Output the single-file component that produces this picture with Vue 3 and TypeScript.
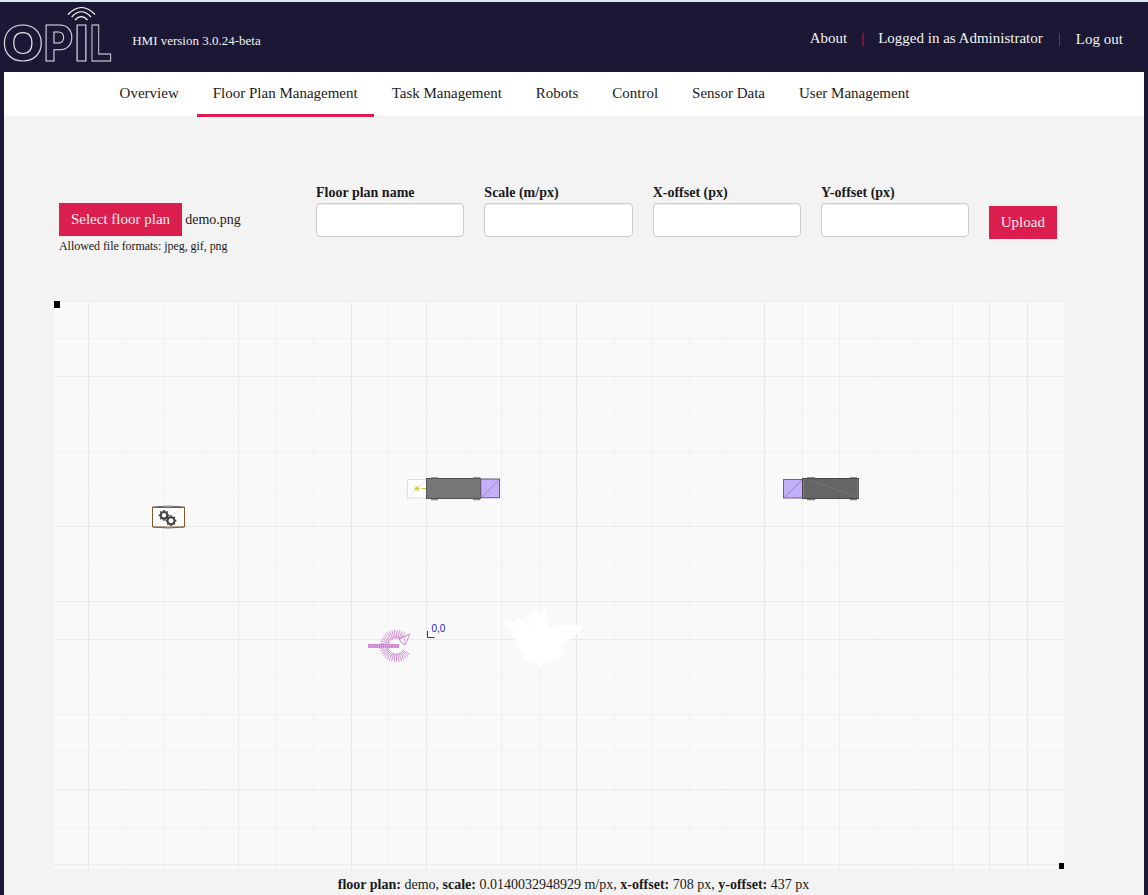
<script setup lang="ts">
const tabs: string[] = ['Overview', 'Floor Plan Management', 'Task Management', 'Robots', 'Control', 'Sensor Data', 'User Management']
const activeTab = 'Floor Plan Management'
const fields: string[] = ['Floor plan name', 'Scale (m/px)', 'X-offset (px)', 'Y-offset (px)']

interface Line { at: number; color: string }
const shades = ['#f7f7f6', '#f3f3f3', '#efefef', '#e9e9ea']
const verticalLevels = [3, 1, 2, 0, 3, 2, 1, 3, 1, 3, 0, 2, 2, 3, 1, 1, 1, 0, 3, 2, 2, 0, 1, 2, 3, 3]
const verticals: Line[] = verticalLevels.map((l, i) => ({ at: Math.floor(34.4 + i * 37.56), color: shades[l] }))
const horizontalLevels = [2, 2, 3, 1, 2, 1, 3, 1, 3, 3, 1, 2, 1, 3, 2, 3]
const horizontals: Line[] = horizontalLevels.map((l, i) => ({ at: Math.floor(0.2 + i * 37.56), color: shades[l] }))

// Sampled headings of the curved trail, drawn as spokes around its centre
const spokes = Array.from({ length: 30 }, (_, i) => {
  const a = (32 + i * 9.3) * Math.PI / 180
  return { x1: 342 + Math.cos(a) * 7.5, y1: 345 + Math.sin(a) * 7.5, x2: 342 + Math.cos(a) * 16, y2: 345 + Math.sin(a) * 16 }
})
const teeth = [0, 45, 90, 135, 180, 225, 270, 315]
</script>

<template>
  <div class="page">
    <header class="header">
      <svg class="logo" width="112" height="76" viewBox="0 0 112 76" role="img" aria-label="OPIL">
        <g class="outline">
          <text x="2.200" y="59" textLength="41.200" lengthAdjust="spacingAndGlyphs">O</text>
          <text x="43.600" y="59" textLength="29.800" lengthAdjust="spacingAndGlyphs">P</text>
          <text x="74.200" y="59" textLength="14.500" lengthAdjust="spacingAndGlyphs">I</text>
          <text x="89.800" y="59" textLength="22.200" lengthAdjust="spacingAndGlyphs">L</text>
        </g>
        <g fill="none" stroke="#fff" stroke-width="1.2">
          <path d="M68 12.500Q81.500 -1.500 95 12.500" />
          <path d="M71.700 15Q81.300 4.500 91 15" />
          <path d="M75 18Q81.300 11.400 87.500 18" />
        </g>
      </svg>
      <span class="version">HMI version 3.0.24-beta</span>
      <div class="account">
        <span>About</span><i class="bar wide"></i><span>Logged in as Administrator</span><i class="bar"></i><span class="logout">Log out</span>
      </div>
    </header>

    <nav class="nav">
      <a v-for="t in tabs" :key="t" class="tab" :class="{ active: t === activeTab }">{{ t }}</a>
    </nav>

    <main class="main">
      <form class="form" @submit.prevent>
        <div class="file">
          <div class="file-row"><button type="button" class="btn">Select floor plan</button><span>demo.png</span></div>
          <div class="hint">Allowed file formats: jpeg, gif, png</div>
        </div>
        <label v-for="f in fields" :key="f" class="field"><span>{{ f }}</span><input type="text"></label>
        <button type="submit" class="btn upload">Upload</button>
      </form>

      <svg class="plan" width="1010" height="568" viewBox="0 0 1010 568">
        <rect width="1010" height="568" fill="#f9f9f9" />
        <rect v-for="l in verticals" :key="'v' + l.at" :x="l.at" y="0" width="1" height="568" :fill="l.color" />
        <rect v-for="l in horizontals" :key="'h' + l.at" x="0" :y="l.at" width="1010" height="1" :fill="l.color" />
        <rect width="6" height="7" />
        <rect x="1005" y="562" width="5" height="6" />

        <!-- left vehicle -->
        <rect x="353.500" y="178.500" width="19" height="18.500" fill="#fefefe" stroke="#dedede" />
        <path d="M354 197L372 179" stroke="#ddd" stroke-width=".7" />
        <path d="M360.500 187.500H365.500M363 185V190M361 185.500L365 189.500M365 185.500L361 189.500M367.500 187.500H372" stroke="#cfc72c" />
        <rect x="372.500" y="177.500" width="54" height="20" fill="#767676" stroke="#555056" />
        <path d="M377 176.800H384M419 176.800H426M377 198.700H384M419 198.700H426" stroke="#777" stroke-width="1" />
        <path d="M380 178L424 194" stroke="#828282" stroke-width=".7" />
        <rect x="426.800" y="178" width="18.700" height="18.700" fill="#c3b0fa" stroke="#665879" />
        <path d="M428 196L445 179" stroke="#8c7cb0" stroke-width=".8" />

        <!-- right vehicle -->
        <rect x="729.500" y="178.500" width="19" height="18.500" fill="#c3b0fa" stroke="#6e607f" />
        <path d="M730 197L748 179" stroke="#8c7cb0" stroke-width=".8" />
        <rect x="748.500" y="177.500" width="56" height="20" fill="#656565" stroke="#4a464a" />
        <path d="M749.500 178V197M804 178V197" stroke="#808080" />
        <path d="M753 176.800H761M796 176.800H803M753 198.700H761M796 198.700H803" stroke="#666" stroke-width="1" />
        <path d="M756 179L802 196" stroke="#7b7b7b" stroke-width=".7" />

        <!-- workstation -->
        <path d="M98.500 206Q114 204 130.500 206V226Q114 228 98.500 226Z" fill="#fff" stroke="#6d6862" />
        <rect x="98.500" y="206.500" width="32" height="19.500" rx="1" fill="none" stroke="#8b5526" />
        <path d="M100 225L129 207" stroke="#ccc" stroke-width=".6" />
        <g v-for="g in [{ x: 110, y: 214.3, r: 3.3 }, { x: 117, y: 219.7, r: 3.5 }]" :key="g.x" :transform="`translate(${g.x} ${g.y})`">
          <circle :r="g.r" fill="#fff" stroke="#444" stroke-width="2.100" />
          <path v-for="a in teeth" :key="a" d="M0 -4V-5.400" stroke="#444" stroke-width="1.700" :transform="`rotate(${a})`" />
        </g>

        <!-- driven trail -->
        <g fill="none" stroke="#c878cc" stroke-width=".85">
          <line v-for="(s, i) in spokes" :key="i" :x1="s.x1" :y1="s.y1" :x2="s.x2" :y2="s.y2" />
          <path d="M345 338L356 333L351 344L347 341Z" />
          <path d="M345 338L351 334.500L350 343" opacity=".6" />
        </g>
        <rect x="314" y="343" width="31" height="4" fill="#dda5df" />
        <path d="M314 345H345" stroke="#c26bc6" stroke-width="4" stroke-dasharray=".6 1.300" />

        <!-- map origin -->
        <path d="M373.500 330V336.500H380.500" fill="none" stroke="#2020ff" stroke-width="1" />
        <text class="origin" x="377.500" y="331">0,0</text>

        <!-- cleared area -->
        <g fill="none" stroke="#fff" stroke-width="6" stroke-linecap="round" stroke-linejoin="round">
          <path fill="#fff" stroke-width="4" d="M469 333L483 329L511 326L505 341L508 353L488 362L478 358L465 344Z" />
          <path stroke-width="6.500" d="M478 338L455 323M480 334L465 320M484 331L476 316M488 330L482 313M491 330L489.500 312M474 344L460 334M478 350L463 342M486 356L472 357M498 352L487 363" />
          <path d="M500 327H525L507 341" />
        </g>
      </svg>

      <p class="status"><b>floor plan:</b> demo, <b>scale:</b> 0.0140032948929 m/px, <b>x-offset:</b> 708 px, <b>y-offset:</b> 437 px</p>
    </main>
  </div>
</template>

<style>
html, body { margin: 0; background: #1b1734; overflow: hidden; }
</style>

<style scoped>
.page {
  box-sizing: border-box;
  width: 1148px;
  height: 895px;
  overflow: hidden;
  border-top: 2px solid #dde3ee;
  background: #1b1734;
  padding: 0 4px;
  font: 14px/20px "Liberation Serif", "Times New Roman", serif;
  color: #1a1a1a;
}
.header { display: flex; align-items: flex-start; height: 70px; color: #f3f3f3; margin-left: -4px; }
.logo { display: block; flex: none; overflow: visible; will-change: transform; }
.outline text { font: 800 50px Inter, sans-serif; fill: none; stroke: #dddce4; stroke-width: 1.1px; }
.version { margin: 29px 0 0 20.2px; font-size: 13px; }
.account { display: flex; align-items: flex-start; margin-left: auto; padding: 26px 21.2px 0 0; font-size: 15px; }
.logout { margin-top: 1px; }
.bar { width: 1px; height: 13px; background: #a51e48; margin: 5px 16px 0; }
.bar.wide { width: 2px; background: #691a3e; margin: 5px 14px 0 15px; }
.nav { display: flex; gap: 1.98px; height: 44px; box-sizing: border-box; padding-left: 99.6px; background: #fff; font-size: 15px; position: relative; }
.tab { box-sizing: border-box; height: 45px; padding: 11px 16px 0; border-bottom: 3px solid transparent; white-space: nowrap; }
.tab.active { border-bottom-color: #dc1e4e; }
.main { height: 779px; background: #f3f3f3; }
.form { display: flex; height: 185px; box-sizing: border-box; padding: 67px 0 0 55px; align-items: flex-start; }
.file { width: 257px; padding-top: 20px; }
.file-row { display: flex; gap: 3.2px; align-items: center; }
.btn { height: 33px; width: 123px; padding: 0; border: 0; background: #dc1e4e; color: #fbeef2; font: 15px/33px "Liberation Serif", serif; white-space: nowrap; }
.hint { font-size: 12px; letter-spacing: -.05px; }
.field { display: block; width: 148.350px; margin-right: 20px; font-weight: bold; }
.field span { display: block; height: 20px; line-height: 19px; }
.field input { display: block; box-sizing: border-box; width: 100%; height: 34px; border: 1px solid #ccc; border-radius: 4px; background: #fff; box-shadow: inset 0 1px 1px rgba(0, 0, 0, .075); }
.upload { width: 68px; margin-top: 23px; margin-left: -.5px; }
.plan { display: block; margin-left: 50px; }
.origin { font: 10px "Liberation Sans", Arial, sans-serif; fill: #1a1ad8; }
.status { margin: 6px 0 0; padding-right: 1px; text-align: center; }
</style>
